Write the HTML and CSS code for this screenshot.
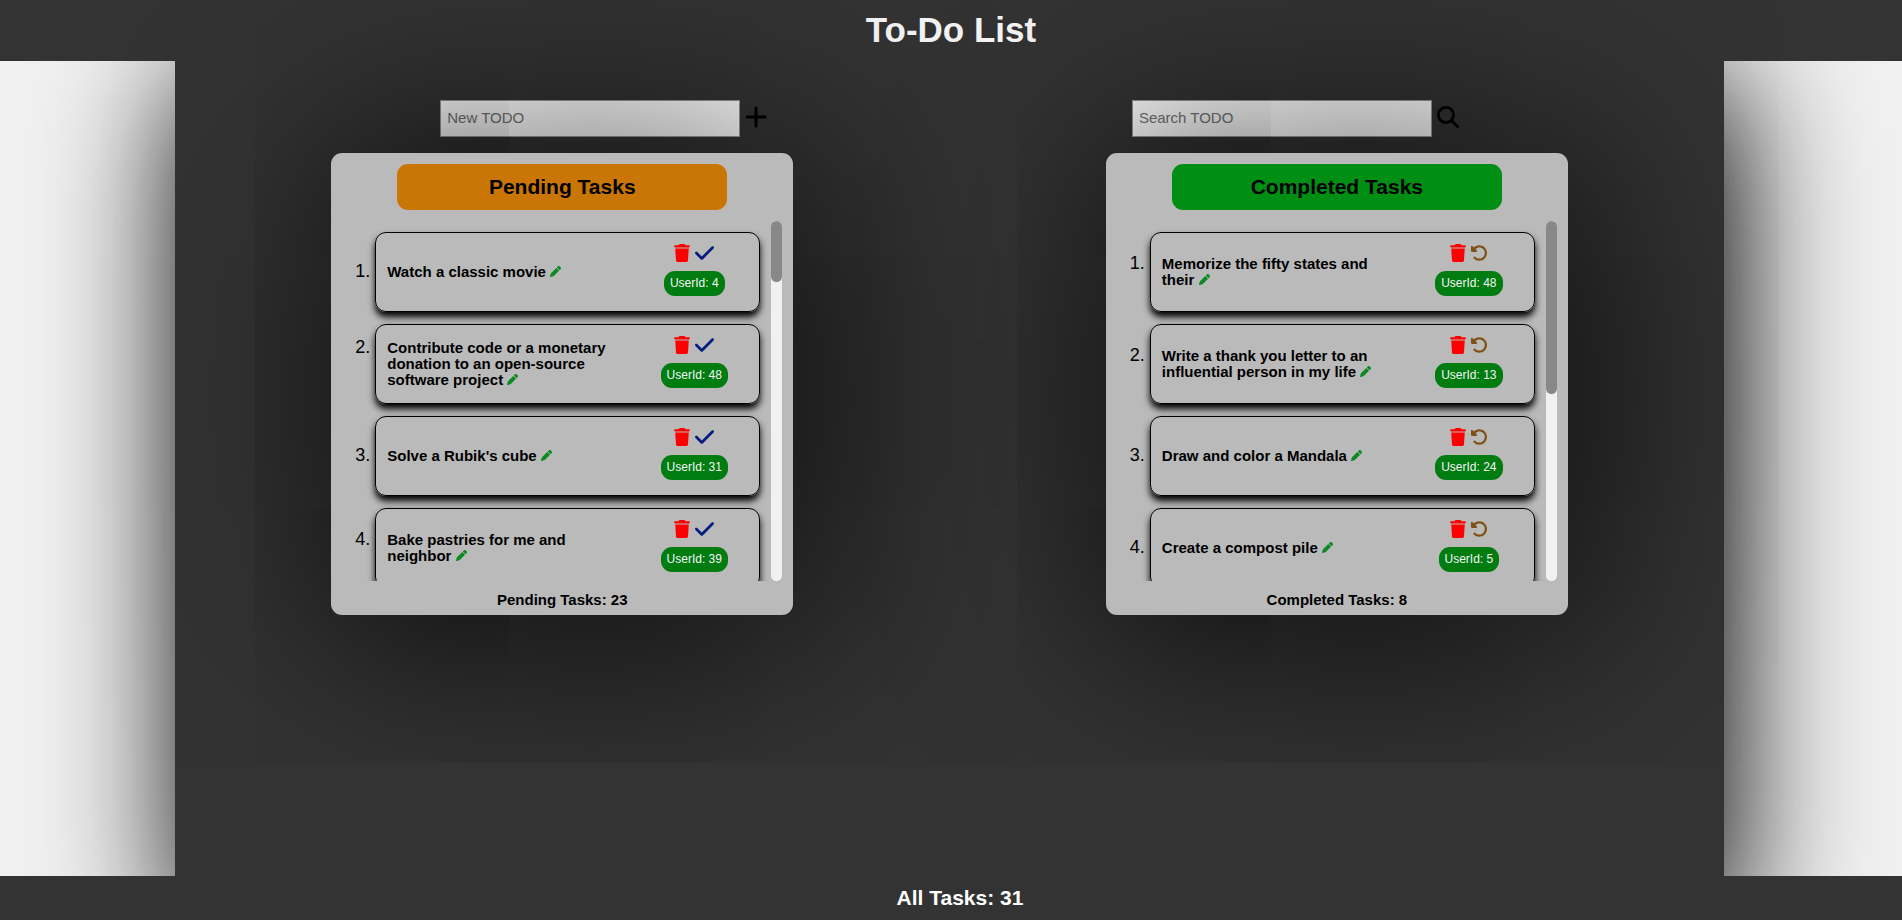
FILE: index.html
```html
<!DOCTYPE html>
<html lang="en">
<head>
<meta charset="utf-8">
<meta name="viewport" content="width=device-width, initial-scale=1">
<title>To-Do List</title>
<link rel="stylesheet" href="styles.css">
</head>
<body>
<svg class="sprite" aria-hidden="true">
  <symbol id="trash" viewBox="0 0 448 512"><path d="M135.2 17.7L128 32H32C14.3 32 0 46.3 0 64S14.3 96 32 96H416c17.7 0 32-14.3 32-32s-14.3-32-32-32H320l-7.2-14.3C307.4 6.8 296.3 0 284.2 0H163.8c-12.1 0-23.2 6.8-28.6 17.7zM416 128H32L53.2 467c1.6 25.3 22.6 45 47.9 45H346.9c25.3 0 46.3-19.7 47.9-45L416 128z"/></symbol>
  <symbol id="check" viewBox="0 96 448 320"><path d="M438.6 105.4c12.5 12.5 12.5 32.8 0 45.3l-256 256c-12.5 12.5-32.8 12.5-45.3 0l-128-128c-12.5-12.5-12.5-32.8 0-45.3s32.8-12.5 45.3 0L160 338.7 393.4 105.4c12.5-12.5 32.8-12.5 45.3 0z"/></symbol>
  <symbol id="undo" viewBox="16 24 464 464"><path d="M48.5 224H40c-13.3 0-24-10.7-24-24V72c0-9.7 5.8-18.5 14.8-22.2s19.3-1.7 26.2 5.2L98.6 96.6c87.6-86.5 228.7-86.2 315.8 1c87.5 87.5 87.5 229.3 0 316.8s-229.3 87.5-316.8 0c-12.5-12.5-12.5-32.8 0-45.3s32.8-12.5 45.3 0c62.5 62.5 163.8 62.5 226.3 0s62.5-163.8 0-226.3c-62.2-62.2-162.7-62.5-225.3-1L185 183c6.9 6.9 8.9 17.2 5.2 26.2s-12.5 14.8-22.2 14.8H48.5z"/></symbol>
  <symbol id="pen" viewBox="0 0 512 512"><path d="M362.7 19.3L314.3 67.7 444.3 197.7l48.4-48.4c25-25 25-65.5 0-90.5L453.3 19.3c-25-25-65.5-25-90.5 0zm-71 71L58.6 323.5c-10.4 10.4-18 23.3-22.2 37.4L1 481.2C-1.5 489.7 .8 498.8 7 505s15.3 8.5 23.7 6.1l120.3-35.4c14.1-4.2 27-11.8 37.4-22.2L421.7 220.3 291.7 90.3z"/></symbol>
  <symbol id="plus" viewBox="0 0 22 22"><path d="M11 2v18M2 11h18" fill="none" stroke="currentColor" stroke-width="3" stroke-linecap="round"/></symbol>
  <symbol id="search" viewBox="0 0 512 512"><path d="M416 208c0 45.9-14.9 88.3-40 122.7L502.6 457.4c12.5 12.5 12.5 32.8 0 45.3s-32.8 12.5-45.3 0L330.7 376c-34.4 25.2-76.8 40-122.7 40C93.1 416 0 322.9 0 208S93.1 0 208 0S416 93.1 416 208zM208 352a144 144 0 1 0 0-288 144 144 0 1 0 0 288z"/></symbol>
</svg>

<header class="header"><h1 class="title">To-Do List</h1></header>

<main class="main">
  <div class="forms">
    <form class="form">
      <input class="field" type="text" placeholder="New TODO" aria-label="New TODO">
      <button class="icon-btn" type="button" aria-label="Add"><svg class="form-icon"><use href="#plus"/></svg></button>
    </form>
    <form class="form">
      <input class="field" type="text" placeholder="Search TODO" aria-label="Search TODO">
      <button class="icon-btn" type="button" aria-label="Search"><svg class="form-icon"><use href="#search"/></svg></button>
    </form>
  </div>

  <div class="panels">
    <section class="panel">
      <h2 class="panel-title pending">Pending Tasks</h2>
      <div class="scroller">
        <ol class="list">
          <li class="item"><div class="task">
            <p class="text">Watch a classic movie <button class="icon-btn" type="button" aria-label="Edit"><svg class="pen"><use href="#pen"/></svg></button></p>
            <div class="side"><div class="actions"><button class="icon-btn" type="button" aria-label="Delete"><svg class="trash"><use href="#trash"/></svg></button><button class="icon-btn" type="button" aria-label="Complete"><svg class="check"><use href="#check"/></svg></button></div><span class="user">UserId: 4</span></div>
          </div></li>
          <li class="item"><div class="task">
            <p class="text">Contribute code or a monetary donation to an open-source software project <button class="icon-btn" type="button" aria-label="Edit"><svg class="pen"><use href="#pen"/></svg></button></p>
            <div class="side"><div class="actions"><button class="icon-btn" type="button" aria-label="Delete"><svg class="trash"><use href="#trash"/></svg></button><button class="icon-btn" type="button" aria-label="Complete"><svg class="check"><use href="#check"/></svg></button></div><span class="user">UserId: 48</span></div>
          </div></li>
          <li class="item"><div class="task">
            <p class="text">Solve a Rubik's cube <button class="icon-btn" type="button" aria-label="Edit"><svg class="pen"><use href="#pen"/></svg></button></p>
            <div class="side"><div class="actions"><button class="icon-btn" type="button" aria-label="Delete"><svg class="trash"><use href="#trash"/></svg></button><button class="icon-btn" type="button" aria-label="Complete"><svg class="check"><use href="#check"/></svg></button></div><span class="user">UserId: 31</span></div>
          </div></li>
          <li class="item"><div class="task">
            <p class="text">Bake pastries for me and neighbor <button class="icon-btn" type="button" aria-label="Edit"><svg class="pen"><use href="#pen"/></svg></button></p>
            <div class="side"><div class="actions"><button class="icon-btn" type="button" aria-label="Delete"><svg class="trash"><use href="#trash"/></svg></button><button class="icon-btn" type="button" aria-label="Complete"><svg class="check"><use href="#check"/></svg></button></div><span class="user">UserId: 39</span></div>
          </div></li>
        </ol>
        <div class="track"><div class="thumb" style="height:17%"></div></div>
      </div>
      <p class="count">Pending Tasks: 23</p>
    </section>

    <section class="panel">
      <h2 class="panel-title completed">Completed Tasks</h2>
      <div class="scroller">
        <ol class="list">
          <li class="item"><div class="task">
            <p class="text">Memorize the fifty states and their <button class="icon-btn" type="button" aria-label="Edit"><svg class="pen"><use href="#pen"/></svg></button></p>
            <div class="side"><div class="actions"><button class="icon-btn" type="button" aria-label="Delete"><svg class="trash"><use href="#trash"/></svg></button><button class="icon-btn" type="button" aria-label="Undo"><svg class="undo"><use href="#undo"/></svg></button></div><span class="user">UserId: 48</span></div>
          </div></li>
          <li class="item"><div class="task">
            <p class="text">Write a thank you letter to an influential person in my life <button class="icon-btn" type="button" aria-label="Edit"><svg class="pen"><use href="#pen"/></svg></button></p>
            <div class="side"><div class="actions"><button class="icon-btn" type="button" aria-label="Delete"><svg class="trash"><use href="#trash"/></svg></button><button class="icon-btn" type="button" aria-label="Undo"><svg class="undo"><use href="#undo"/></svg></button></div><span class="user">UserId: 13</span></div>
          </div></li>
          <li class="item"><div class="task">
            <p class="text">Draw and color a Mandala <button class="icon-btn" type="button" aria-label="Edit"><svg class="pen"><use href="#pen"/></svg></button></p>
            <div class="side"><div class="actions"><button class="icon-btn" type="button" aria-label="Delete"><svg class="trash"><use href="#trash"/></svg></button><button class="icon-btn" type="button" aria-label="Undo"><svg class="undo"><use href="#undo"/></svg></button></div><span class="user">UserId: 24</span></div>
          </div></li>
          <li class="item"><div class="task">
            <p class="text">Create a compost pile <button class="icon-btn" type="button" aria-label="Edit"><svg class="pen"><use href="#pen"/></svg></button></p>
            <div class="side"><div class="actions"><button class="icon-btn" type="button" aria-label="Delete"><svg class="trash"><use href="#trash"/></svg></button><button class="icon-btn" type="button" aria-label="Undo"><svg class="undo"><use href="#undo"/></svg></button></div><span class="user">UserId: 5</span></div>
          </div></li>
        </ol>
        <div class="track"><div class="thumb" style="height:48%"></div></div>
      </div>
      <p class="count">Completed Tasks: 8</p>
    </section>
  </div>
</main>

<footer class="footer"><h2 class="total">All Tasks: 31</h2></footer>
</body>
</html>
```

FILE: styles.css
```css
* {
  box-sizing: border-box;
  margin: 0;
  padding: 0;
}

body {
  display: flex;
  flex-direction: column;
  min-height: 100vh;
  font-family: "Liberation Sans", Arial, sans-serif;
  background: #f1f1f1;
}

.sprite {
  position: absolute;
  width: 0;
  height: 0;
}

svg {
  display: block;
  fill: currentColor;
}

.header {
  position: relative;
  z-index: 1;
  padding: 10px 0 11px;
  background: #333;
  color: #f5f5f5;
  text-align: center;
}

.title {
  font-size: 35px;
  line-height: 40px;
}

.main {
  flex: 1;
  margin: 0 9.35% 0 9.2%;
  padding-top: 39px;
  background: #333;
  box-shadow: 8px 20px 130px #000;
}

.forms {
  display: flex;
  padding: 0 83px;
  margin-bottom: 16px;
}

.form {
  flex: 1;
  display: flex;
  justify-content: center;
  gap: 5px;
}

.field {
  width: 300px;
  height: 37px;
  padding: 0 6px 2px;
  border: 1px solid #999;
  background: #fff;
  font: 15px "Liberation Sans", Arial, sans-serif;
}

.field::placeholder {
  color: #757575;
}

.icon-btn {
  border: 0;
  background: none;
  color: inherit;
  cursor: pointer;
}

.form-icon {
  width: 22px;
  height: 22px;
  margin-bottom: 4px;
  color: #000;
}

.panels {
  display: flex;
  justify-content: space-around;
}

.panel {
  position: relative;
  z-index: 2;
  width: 462px;
  padding: 11px 11px 7px;
  border-radius: 11px;
  background: #bababa;
  box-shadow: 10px 10px 220px #000;
}

.panel-title {
  width: 75%;
  margin: 0 auto 11px;
  padding: 11px 0;
  border-radius: 11px;
  font-size: 21px;
  line-height: 24px;
  text-align: center;
}

.pending {
  background: #ca7606;
}

.completed {
  background: #008e14;
}

.scroller {
  display: flex;
  height: 360px;
}

.list {
  flex: 1;
  overflow: hidden;
  padding: 11px 11px 0 33px;
  font-size: 18px;
}

.item {
  margin-bottom: 12px;
}

.task {
  display: flex;
  align-items: center;
  justify-content: space-between;
  height: 80px;
  padding-left: 11px;
  border: 1px solid #000;
  border-radius: 11px;
  box-shadow: 0 5px 7px #000;
}

.text {
  width: 232px;
  font-size: 15px;
  line-height: 16px;
  font-weight: bold;
}

.text .icon-btn {
  display: inline-block;
  color: #0a8a20;
}

.pen {
  width: 11px;
  height: 11px;
}

.side {
  display: flex;
  flex-direction: column;
  align-items: center;
  gap: 9px;
  width: 130px;
  padding-bottom: 4px;
}

.actions {
  display: flex;
  align-items: center;
  gap: 5px;
}

.trash {
  width: 16px;
  height: 18px;
  color: #f00;
}

.check {
  width: 19px;
  height: 14px;
  color: #001f7e;
}

.undo {
  width: 16px;
  height: 16px;
  color: #7f5010;
}

.user {
  padding: 5px 6px 6px;
  border-radius: 11px;
  background: #007c10;
  color: #f5f5f5;
  font-size: 12px;
  line-height: 14px;
}

.track {
  width: 11px;
  border-radius: 6px;
  background: #f1f1f1;
}

.thumb {
  border-radius: 6px;
  background: #888;
}

.count {
  padding-top: 10px;
  font-size: 15px;
  line-height: 17px;
  font-weight: bold;
  text-align: center;
}

.footer {
  position: fixed;
  z-index: 3;
  left: 0;
  right: 0;
  bottom: 0;
  padding: 10px 0 10px 18px;
  background: #333;
  color: #fff;
  text-align: center;
}

.total {
  font-size: 21px;
  line-height: 24px;
}
```
